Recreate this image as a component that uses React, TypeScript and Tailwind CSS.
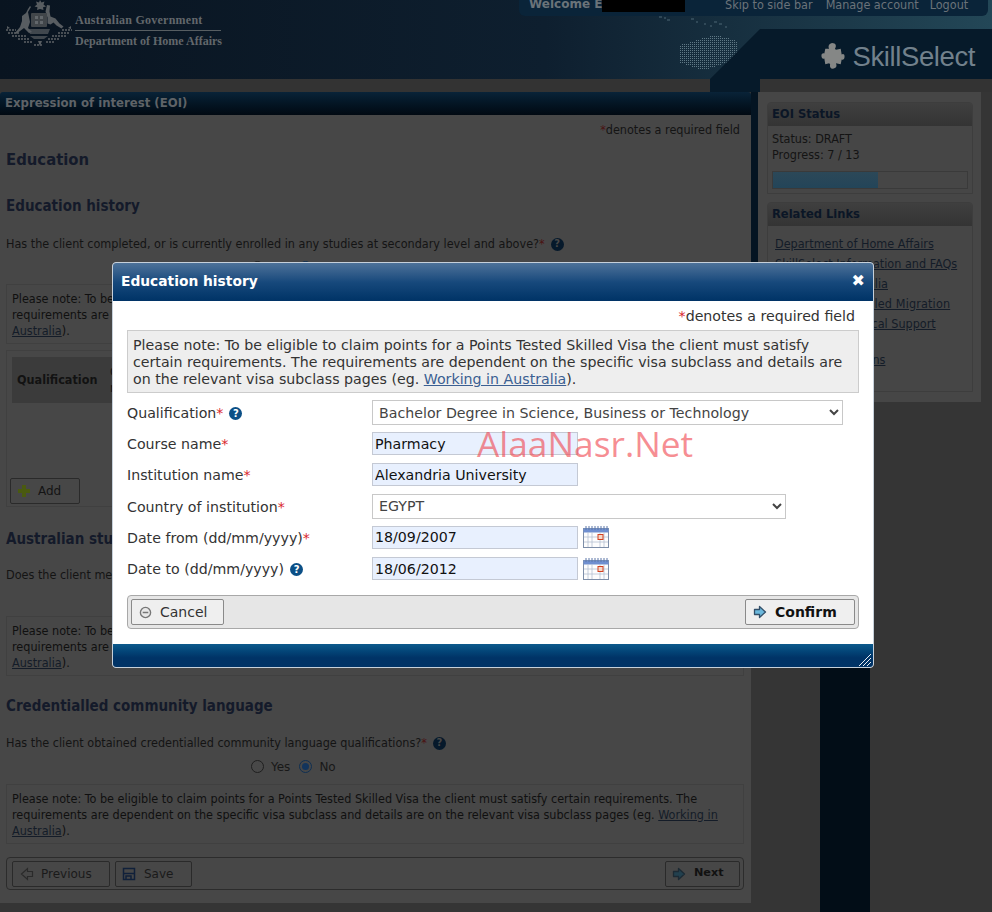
const NOTE_TAIL = "Please note: To be eligible to claim points for a Points Tested Skilled Visa the client must satisfy certain requirements. The requirements are dependent on the specific visa subclass and details are on the relevant visa subclass pages (eg. ";

// the page behind the dialog is set in the narrower cut, the dialog in the regular one
const NARROW = "font-['DejaVu_Sans_Condensed','DejaVu_Sans',sans-serif]";

function Help({ dim = false }: { dim?: boolean }) {
  return (
    <span
      className={`ml-[6px] inline-flex h-[13px] w-[13px] items-center justify-center rounded-full align-[1px] font-['DejaVu_Sans',sans-serif] text-[10px] leading-none font-bold ${
        dim ? "bg-[#06192b] text-[#474747]" : "bg-[#0b4f86] text-white"
      }`}
    >
      ?
    </span>
  );
}

function Star({ dim = false }: { dim?: boolean }) {
  return <span className={dim ? "text-[#4a1212]" : "text-[#d9252c]"}>*</span>;
}

function BgNote() {
  return (
    <div className={`h-[60px] border border-[#404040] px-[5px] py-[6px] text-[12.500px] leading-[16px] text-[#101010] ${NARROW}`}>
      {NOTE_TAIL}
      <a className="text-[#141c28] underline">Working in Australia</a>).
    </div>
  );
}

function BgRadios() {
  return (
    <div className="mt-[7px] flex h-[16px] items-center pl-[245px] text-[12px] text-[#181818]">
      <span className="h-[13px] w-[13px] rounded-full border border-[#1f1f1f] bg-[#484848]" />
      <span className="ml-[7px] pt-[2px]">Yes</span>
      <span className="ml-[9px] flex h-[13px] w-[13px] items-center justify-center rounded-full border border-[#0f2f52]">
        <span className="h-[7px] w-[7px] rounded-full bg-[#12345c]" />
      </span>
      <span className="ml-[7px] pt-[2px]">No</span>
    </div>
  );
}

function BgHeading({ children, mt }: { children: string; mt: string }) {
  return (
    <h3 className={`${mt} h-[18px] text-[15px] leading-[18px] font-bold text-[#141a2a] ${NARROW}`}>{children}</h3>
  );
}

function SideBox({ title, className, children }: { title: string; className: string; children: React.ReactNode }) {
  return (
    <div className={`rounded-t-[4px] border border-[#3d3d3d] ${className}`}>
      <div className={`h-[23px] bg-gradient-to-b from-[#3f3f3f] to-[#343434] px-[4px] text-[12.800px] leading-[22px] font-bold text-[#0b1626] ${NARROW}`}>
        {title}
      </div>
      {children}
    </div>
  );
}

function CoatOfArms() {
  return (
    <svg viewBox="0 0 70 50" className="h-[50px] w-[70px]" fill="#585d61" stroke="none">
      <path d="M36 0l1.500 2.500 3-1-1 3 2.500 2-3 .8.500 2.700-3.500-1-3 1 .5-2.700-3-.8 2.500-2-1-3 3 1z" />
      <path d="M26 6l1 1-3 5 1 5 1 5-2 6 4 4-3 1-5-5-4 3-4 3-1-1 5-6 2-6 0-5 4-3 2-4z" />
      <path d="M43 5l3 .5-.5 6 1 5 5 2 4 5 4 3-2 2-5-3-3-3-3 2-3-1 0-6-2-6z" />
      <rect x="27" y="13" width="16" height="14" rx="1" fill="#41464a" />
      <path d="M31 16h3v3h-3zM36 16h3v3h-3zM31 21h3v3h-3zM36 21h3v3h-3z" fill="#62676b" />
      <path
        d="M2 30h10M4 33h12M8 36h14M14 39h12M20 42h8M30 45h8M42 42h8M44 39h12M48 36h14M54 33h12M58 30h10"
        stroke="#5d6266"
        strokeWidth="1.500"
        strokeDasharray="2 1"
        fill="none"
      />
      <path d="M24 29h22l-2 5H26zM26 36h18l-4 3H30z" opacity=".7" />
      <path d="M3 26l3 2-3 1zM67 26l-3 2 3 1zM34 41l2 5 2-5z" />
    </svg>
  );
}

function Puzzle() {
  return (
    <svg viewBox="0 0 24 28" className="h-[27px] w-[24px]" fill="#858786">
      <path d="M8 6c-1-2-1-5 3-6 4 0 5 3 3 6l1 1 5-1 1 6c1-1 3-1 3 2s-2 4-3 3l-1 5-5-1c1 2 1 4-1 5-3 2-6 0-5-4l-1-1-4 1-1-6c-2 1-3-1-3-3s2-3 3-2l1-5z" />
    </svg>
  );
}

function AusMap() {
  const dots: React.ReactElement[] = [];
  for (let y = 34; y < 70; y += 2) {
    for (let x = 680; x < 737; x += 2) {
      const inside = y > 34 + Math.abs(x - 715) * 0.3 && y < 70 - Math.abs(x - 703) * 0.32;
      if (inside) dots.push(<rect key={`${x}-${y}`} x={x - 659} y={y} width="1" height="1" />);
    }
  }
  return (
    <svg viewBox="0 0 100 80" className="h-[80px] w-[100px]" fill="#5f7885">
      {dots}
      <path d="M0 17h3M5 18h2M8 20h3M32 19h3M37 22h2M45 24h2M51 26h2M55 22h3M60 24h3M66 27h2" stroke="#4d6674" />
    </svg>
  );
}

function CalendarIcon() {
  return (
    <svg viewBox="0 0 26 22" className="ml-[5px] h-[22px] w-[26px]">
      <rect x=".5" y="2.500" width="25" height="19" fill="#fdfdfd" stroke="#7d8ea8" />
      <rect x=".5" y="2.500" width="25" height="4" fill="#6f8fd0" />
      <path d="M3 0v4M6 0v4M9 0v4M12 0v4M15 0v4M18 0v4M21 0v4M24 0v4" stroke="#5d76a8" strokeWidth="1" />
      <path d="M9 6v15M17 6v15M1 11h24M1 16h24M5 6v15M21 6v15" stroke="#b5c0d2" strokeWidth=".8" fill="none" />
      <rect x="15" y="8.500" width="5" height="5" fill="#f5d8c8" stroke="#d2401f" />
    </svg>
  );
}

function RightArrow({ fill, stroke }: { fill: string; stroke: string }) {
  return (
    <svg viewBox="0 0 14 14" className="h-[14px] w-[14px]">
      <path d="M1.500 4.500h5v-3l6 5.500-6 5.500v-3h-5z" fill={fill} stroke={stroke} strokeWidth="1.300" strokeLinejoin="round" />
    </svg>
  );
}

function Field({ label, children }: { label: React.ReactNode; children: React.ReactNode }) {
  return (
    <div className="flex h-[31.200px] items-center">
      <div className="w-[245px] pt-[2px] text-[14.200px] text-[#333]">{label}</div>
      {children}
    </div>
  );
}

const inputClass =
  "h-[23px] w-[206px] border border-[#c4c9d4] bg-[#e8f0fe] px-[2px] text-[14.200px] text-[#111] outline-none";
const selectClass = "h-[25px] border border-[#c8c8c8] bg-white pl-[2px] text-[14.200px] text-[#444] outline-none";

function Modal() {
  return (
    <div className="absolute top-[262px] left-[112px] w-[762px] overflow-hidden rounded-[4px] border border-[#c6d0da] bg-white">
      <div className="flex h-[38px] items-center justify-between bg-gradient-to-b from-[#4d7299] via-[#17497c] to-[#003366] pr-[8px] pb-[2px] pl-[8px] text-[13.800px] font-bold text-white">
        <span>Education history</span>
        <span className="text-[16px] leading-none">✖</span>
      </div>
      <div className="px-[14px] pt-[7px] pb-[15px]">
        <div className="pr-[4px] text-right text-[14.200px] leading-[17px] text-[#333]">
          <Star />
          denotes a required field
        </div>
        <div className="mt-[5px] h-[63px] border border-[#ccc] bg-[#eee] px-[5px] pt-[6px] text-[14.200px] leading-[17px] text-[#333]">
          Please note: To be eligible to claim points for a Points Tested Skilled Visa the client must satisfy certain
          requirements. The requirements are dependent on the specific visa subclass and details are on the relevant
          visa subclass pages (eg. <a className="text-[#3b5f92] underline">Working in Australia</a>).
        </div>
        <div className="mt-[4px]">
          <Field
            label={
              <>
                Qualification
                <Star />
                <Help />
              </>
            }
          >
            <select className={`${selectClass} w-[471px]`} defaultValue="b">
              <option value="b">Bachelor Degree in Science, Business or Technology</option>
            </select>
          </Field>
          <Field
            label={
              <>
                Course name
                <Star />
              </>
            }
          >
            <input className={inputClass} defaultValue="Pharmacy" />
          </Field>
          <Field
            label={
              <>
                Institution name
                <Star />
              </>
            }
          >
            <input className={inputClass} defaultValue="Alexandria University" />
          </Field>
          <Field
            label={
              <>
                Country of institution
                <Star />
              </>
            }
          >
            <select className={`${selectClass} w-[414px]`} defaultValue="eg">
              <option value="eg">EGYPT</option>
            </select>
          </Field>
          <Field
            label={
              <>
                Date from (dd/mm/yyyy)
                <Star />
              </>
            }
          >
            <input className={inputClass} defaultValue="18/09/2007" />
            <CalendarIcon />
          </Field>
          <Field
            label={
              <>
                Date to (dd/mm/yyyy)
                <Help />
              </>
            }
          >
            <input className={inputClass} defaultValue="18/06/2012" />
            <CalendarIcon />
          </Field>
        </div>
        <div className="mt-[11px] flex h-[34px] items-center justify-between rounded-[4px] border border-[#a8a8a8] bg-[#e6e6e6] px-[3px]">
          <button className="flex h-[26px] w-[93px] items-center rounded-[2px] border border-[#8a8a8a] bg-[#efefef] pl-[7px] text-[14px] text-[#333]">
            <svg viewBox="0 0 14 14" className="h-[13px] w-[13px]">
              <circle cx="7" cy="7" r="5.500" fill="#e8e8e8" stroke="#777" strokeWidth="1.500" />
              <path d="M4 7h6" stroke="#777" strokeWidth="1.500" />
            </svg>
            <span className="ml-[8px]">Cancel</span>
          </button>
          <button className="flex h-[26px] w-[110px] items-center rounded-[2px] border border-[#8a8a8a] bg-[#efefef] pl-[7px] text-[14px] font-bold text-[#111]">
            <RightArrow fill="#6cb9dd" stroke="#33506a" />
            <span className="ml-[8px]">Confirm</span>
          </button>
        </div>
      </div>
      <div className="relative h-[23px] bg-gradient-to-b from-[#0c5a8c] to-[#003366] to-60%">
        <svg viewBox="0 0 12 12" className="absolute right-[2px] bottom-[1px] h-[12px] w-[12px]" stroke="#e8eef4">
          <path d="M0 12L12 0M4 12l8-8M8 12l4-4" />
        </svg>
      </div>
    </div>
  );
}

export default function App() {
  return (
    <div className="relative h-[912px] w-[992px] overflow-hidden bg-[#353535] font-['DejaVu_Sans',Verdana,sans-serif]">
      <header className="flex h-[79px] justify-between bg-gradient-to-r from-[#091420] via-[#0e1f2f] via-55% to-[#234757]">
        <div className="flex items-start pl-[4px]">
          <CoatOfArms />
          <div className="mt-[13px] ml-[1px] w-[146px] font-['Liberation_Serif',serif] text-[12px] font-bold text-[#62676b]">
            <div className="h-[18px] border-b border-[#575e62] leading-[14px] tracking-[0.25px]">Australian Government</div>
            <div className="mt-[3px] leading-[14px] whitespace-nowrap">Department of Home Affairs</div>
          </div>
        </div>
        <div className="relative flex w-[473px] flex-col">
          <div className={`mr-[4px] flex h-[16px] items-center rounded-b-[6px] bg-[#0a2439] pb-[5px] pl-[10px] text-[12.500px] text-[#6a7379] ${NARROW}`}>
            <span className="relative z-10 flex h-[12px] w-[156px] items-start self-start overflow-hidden font-['DejaVu_Sans',sans-serif] text-[12px] leading-[10px] font-bold">
              <span className="mt-[-1px] whitespace-nowrap">Welcome E</span>
            </span>
            <span className="absolute top-0 left-[83px] z-20 h-[12px] w-[83px] bg-black" />
            <span className="ml-[40px]">Skip to side bar</span>
            <span className="ml-[13px]">Manage account</span>
            <span className="ml-[11px]">Logout</span>
          </div>
          <div className="absolute top-0 left-[140px]">
            <AusMap />
          </div>
          <div className="relative mt-[13px] flex h-[50px] w-[282px] items-center justify-end self-end bg-[#061a2a] pt-[5px] pr-[17px] [clip-path:polygon(50px_0,100%_0,100%_100%,0_100%)]">
            <Puzzle />
            <span className="ml-[8px] font-['Liberation_Sans',sans-serif] text-[27.500px] leading-none tracking-[-0.4px] text-[#72818c]">
              SkillSelect
            </span>
          </div>
        </div>
      </header>

      <div className="flex h-[13px] bg-[#333]">
        <div className="ml-[710px] w-[50px] bg-[#061a2a]" />
      </div>

      <div className="flex">
        <main className="h-[811px] w-[751px]">
          <div className={`flex h-[23px] items-center rounded-tl-[3px] rounded-tr-[3px] bg-gradient-to-b from-[#092338] to-[#010912] pb-[2px] pl-[5px] text-[13px] font-bold text-[#5f6367] ${NARROW}`}>
            Expression of interest (EOI)
          </div>
          <div className="bg-[#474747] pt-[7px] pr-[7px] pb-[13px] pl-[6px]">
            <div className={`h-[16px] pr-[4px] text-right text-[12.500px] leading-[16px] text-[#141414] ${NARROW}`}>
              <Star dim />
              denotes a required field
            </div>
            <h2 className={`mt-[12px] h-[20px] text-[16.500px] leading-[20px] font-bold text-[#141a2a] ${NARROW}`}>
              Education
            </h2>
            <BgHeading mt="mt-[27px]">Education history</BgHeading>
            <p className={`mt-[21px] h-[16px] text-[12.500px] leading-[16px] text-[#141414] ${NARROW}`}>
              Has the client completed, or is currently enrolled in any studies at secondary level and above?
              <Star dim />
              <Help dim />
            </p>
            <BgRadios />
            <div className="mt-[9px]">
              <BgNote />
            </div>
            <div className="mt-[6px] flex h-[157px] flex-col justify-between border border-[#404040] px-[5px] pt-[6px] pb-[2px]">
              <div className={`flex h-[46px] items-center bg-[#3b3b3b] pl-[5px] text-[12.500px] leading-[16px] font-bold text-[#121212] ${NARROW}`}>
                <span className="w-[93px]">Qualification</span>
                <span className="font-normal">
                  Course
                  <br />
                  name
                </span>
              </div>
              <button className="ml-[-2px] flex h-[26px] w-[70px] items-center rounded-[2px] border border-[#2a2a2a] pl-[7px] text-[12px] text-[#141414]">
                <svg viewBox="0 0 12 12" className="h-[12px] w-[12px]" fill="#4a5a10">
                  <path d="M4 0h4v4h4v4H8v4H4V8H0V4h4z" />
                </svg>
                <span className="ml-[8px]">Add</span>
              </button>
            </div>
            <BgHeading mt="mt-[23px]">Australian study requirement</BgHeading>
            <p className={`mt-[19px] h-[16px] text-[12.500px] leading-[16px] text-[#141414] ${NARROW}`}>
              Does the client meet the Australian study requirements?
              <Star dim />
            </p>
            <BgRadios />
            <div className="mt-[10px]">
              <BgNote />
            </div>
            <BgHeading mt="mt-[21px]">Credentialled community language</BgHeading>
            <p className={`mt-[20px] h-[16px] text-[12.500px] leading-[16px] text-[#141414] ${NARROW}`}>
              Has the client obtained credentialled community language qualifications?
              <Star dim />
              <Help dim />
            </p>
            <BgRadios />
            <div className="mt-[10px]">
              <BgNote />
            </div>
            <div className="mt-[13px] flex h-[33px] items-center justify-between rounded-[4px] border border-[#2c2c2c] pr-[3px] pl-[5px] text-[12px] text-[#1a1a1a]">
              <div className="flex gap-[5px]">
                <button className="flex h-[26px] w-[98px] items-center rounded-[2px] border border-[#2a2a2a] pl-[7px]">
                  <svg viewBox="0 0 14 14" className="h-[14px] w-[14px]">
                    <path d="M12.500 4.500h-5v-3l-6 5.500 6 5.500v-3h5z" fill="none" stroke="#2a2a2a" strokeWidth="1.200" />
                  </svg>
                  <span className="ml-[7px]">Previous</span>
                </button>
                <button className="flex h-[26px] w-[77px] items-center rounded-[2px] border border-[#2a2a2a] pl-[6px]">
                  <svg viewBox="0 0 14 14" className="h-[14px] w-[14px]">
                    <path d="M1.500 1.500h11v11h-11z" fill="none" stroke="#10203a" strokeWidth="1.500" />
                    <path d="M1 6.500h12M4 13V9h5v4" fill="none" stroke="#10203a" strokeWidth="1.500" />
                  </svg>
                  <span className="ml-[8px]">Save</span>
                </button>
              </div>
              <button className="flex h-[26px] w-[75px] items-center rounded-[2px] border border-[#2a2a2a] pl-[6px] text-[11.200px] font-bold text-[#111]">
                <RightArrow fill="#22404e" stroke="#1c2a34" />
                <span className="ml-[8px]">Next</span>
              </button>
            </div>
          </div>
        </main>

        <aside className="flex w-[241px] flex-col">
          <div className="mr-[11px] h-[310px] border-l-[7px] border-[#041422] bg-[#464646] pt-[10px] pr-[8px] pl-[9px]">
            <SideBox title="EOI Status" className="h-[92px]">
              <div className={`px-[4px] pt-[5px] text-[12.500px] leading-[16px] text-[#141414] ${NARROW}`}>
                Status: DRAFT
                <br />
                Progress: 7 / 13
                <div className="mt-[8px] h-[18px] border border-[#3a3a3a]">
                  <div className="h-full w-[54%] bg-gradient-to-b from-[#2c4858] to-[#234559]" />
                </div>
              </div>
            </SideBox>
            <SideBox title="Related Links" className="mt-[8px] h-[190px]">
              <div className={`px-[7px] pt-[8px] text-[12.500px] leading-[20px] text-[#141c28] underline ${NARROW}`}>
                <div>Department of Home Affairs</div>
                <div>SkillSelect Information and FAQs</div>
                <div>Working in Australia</div>
                <div className="tracking-[0.15px]">Points Tested Skilled Migration</div>
                <div>SkillSelect Technical Support</div>
                <div className="mt-[2px] leading-[16px]">
                  Visa Finder
                  <br />
                  Skilled Occupations
                </div>
                <div className="mt-[2px]">Glossary</div>
              </div>
            </SideBox>
          </div>
          <div className="ml-[69px] h-[510px] w-[50px] bg-[#020d17]" />
        </aside>
      </div>

      <Modal />
      <div className="absolute top-[421px] left-[477px] font-['Open_Sans',sans-serif] text-[35.300px] leading-[44px] text-[#f0424a]/60">
        AlaaNasr.Net
      </div>
    </div>
  );
}
